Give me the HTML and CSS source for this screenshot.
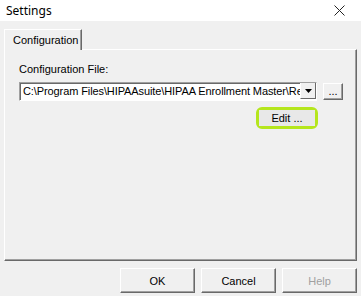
FILE: index.html
```html
<!DOCTYPE html>
<html lang="en">
<head>
<meta charset="UTF-8">
<title>Settings</title>
<link rel="stylesheet" href="styles.css">
</head>
<body>
<div class="window">
    <div class="titlebar">
        <span class="title">Settings</span>
        <svg class="close" width="11" height="11" viewBox="0 0 11 11" aria-label="Close">
            <path d="M0.5 0.5 L10.5 10.5 M10.5 0.5 L0.5 10.5" stroke="#222" stroke-width="1" fill="none"/>
        </svg>
    </div>

    <div class="content">
        <div class="tabs">
            <div class="tab active">Configuration</div>
        </div>
        <div class="panel">
            <label class="field-label" for="configFile">Configuration File:</label>
            <div class="file-row">
                <div class="combo">
                    <span class="combo-text" id="configFile">C:\Program Files\HIPAAsuite\HIPAA Enrollment Master\Re</span>
                    <span class="combo-arrow">
                        <svg width="7" height="4" viewBox="0 0 7 4"><path d="M0 0 H7 L3.5 4 Z" fill="#000"/></svg>
                    </span>
                </div>
                <button class="btn browse">...</button>
            </div>
            <div class="edit-row">
                <span class="highlight"><button class="btn edit">Edit ...</button></span>
            </div>
        </div>

        <div class="actions">
            <button class="btn action">OK</button>
            <button class="btn action">Cancel</button>
            <button class="btn action" disabled>Help</button>
        </div>
    </div>
</div>
</body>
</html>
```

FILE: styles.css
```css
* { margin: 0; padding: 0; box-sizing: border-box; }
body {
    background: #f0f0f0;
    font-family: 'Liberation Sans', Arial, sans-serif;
    font-size: 11px;
    color: #000;
}
.window {
    width: 361px;
    height: 296px;
    display: flex;
    flex-direction: column;
    overflow: hidden;
}
.titlebar {
    height: 21px;
    background: #fff;
    display: flex;
    align-items: center;
    justify-content: space-between;
    padding: 0 16px 0 6px;
}
.title {
    font-family: 'Noto Sans', 'Open Sans', sans-serif;
    font-size: 12px;
    color: #000;
}
.content {
    flex: 1;
    padding: 8px 4px 0 4px;
    display: flex;
    flex-direction: column;
}
.tabs {
    display: flex;
    height: 21px;
    position: relative;
    z-index: 1;
}
.tab {
    width: 78px;
    height: 21px;
    border-top: 1px solid #fff;
    border-left: 1px solid #fff;
    border-right: 1px solid #696969;
    box-shadow: inset -1px 0 #a0a0a0;
    background: #f0f0f0;
    padding: 4px 0 0 8px;
    line-height: 13px;
}
.panel {
    width: 353px;
    height: 212px;
    margin-top: -1px;
    border-top: 1px solid #fff;
    border-left: 1px solid #fff;
    border-right: 1px solid #696969;
    border-bottom: 1px solid #696969;
    box-shadow: inset -1px -1px #a0a0a0;
    padding: 13px 0 0 14px;
}
.field-label {
    display: block;
    line-height: 13px;
    height: 19px;
}
.file-row {
    display: flex;
    align-items: center;
    gap: 6px;
}
.combo {
    width: 298px;
    height: 19px;
    background: #fff;
    border-top: 1px solid #a0a0a0;
    border-left: 1px solid #a0a0a0;
    border-right: 1px solid #fff;
    border-bottom: 1px solid #fff;
    box-shadow: inset 1px 1px #696969;
    display: flex;
    overflow: hidden;
}
.combo-text {
    flex: 1;
    white-space: nowrap;
    overflow: hidden;
    padding: 2px 0 0 3px;
    line-height: 13px;
    letter-spacing: -0.1px;
}
.combo-arrow {
    width: 16px;
    height: 17px;
    background: #f0f0f0;
    border-top: 1px solid #fff;
    border-left: 1px solid #fff;
    border-right: 1px solid #696969;
    border-bottom: 1px solid #696969;
    display: flex;
    align-items: center;
    justify-content: center;
    margin-top: -1px;
}
.btn {
    font-family: 'Liberation Sans', Arial, sans-serif;
    font-size: 11px;
    background: #f0f0f0;
    color: #000;
    border-top: 1px solid #fff;
    border-left: 1px solid #fff;
    border-right: 1px solid #696969;
    border-bottom: 1px solid #696969;
    box-shadow: inset -1px -1px #a0a0a0;
    padding: 0;
}
.btn:disabled {
    color: #a0a0a0;
}
.browse {
    width: 20px;
    height: 17px;
    line-height: 13px;
    display: flex;
    align-items: center;
    justify-content: center;
}
.edit-row {
    display: flex;
    padding: 6px 0 0 237px;
}
.highlight {
    display: inline-flex;
    border: 3px solid #b5e61d;
    border-radius: 6px;
}
.edit {
    width: 56px;
    height: 16px;
    background: #e8e8e8;
    border: none;
    box-shadow: none;
    line-height: 14px;
}
.actions {
    display: flex;
    justify-content: flex-end;
    gap: 6px;
    padding: 7px 0 0 0;
}
.action {
    width: 75px;
    height: 25px;
}
```
